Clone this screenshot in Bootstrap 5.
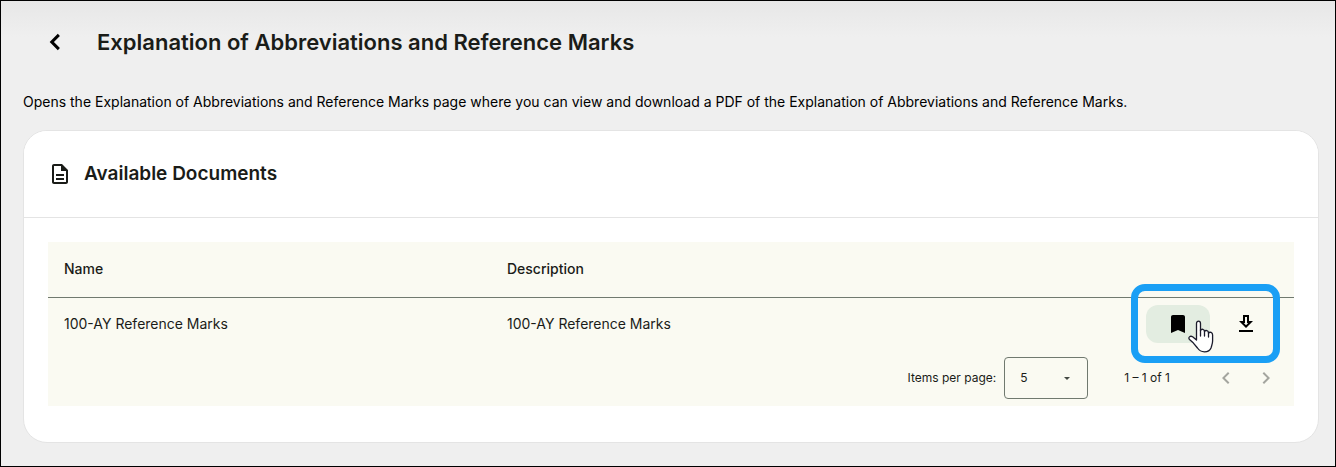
<!DOCTYPE html>
<html lang="en">
<head>
<meta charset="utf-8">
<meta name="viewport" content="width=device-width, initial-scale=1">
<title>Explanation of Abbreviations and Reference Marks</title>
<link href="https://cdn.jsdelivr.net/npm/bootstrap@5.3.0/dist/css/bootstrap.min.css" rel="stylesheet">
<style>
  body { font-family: Inter, "Liberation Sans", sans-serif; font-size: 14px; line-height: 20px; color: #1a1c18; }
  .page-shell { border: 1px solid #000; background: linear-gradient(#e7e7e7, #efefef 36px); padding: 21px 16px 20px 22px; }
  .back-btn { width: 64px; height: 40px; line-height: 0; }
  .page-title { font-size: 22px; line-height: 28px; font-weight: 600; margin-left: 10px; }
  .intro { color: #000; margin: 30px 0 18px; }
  .doc-card { --bs-card-border-color: #e4e4e4; --bs-card-border-radius: 24px; --bs-card-inner-border-radius: 23px; }
  .doc-card .card-header { background: #fff; padding: 30px 24px; border-color: #e4e4e4; }
  .card-name { font-size: 19px; line-height: 26px; font-weight: 600; }
  .doc-card .card-body { padding: 24px 24px 36px; }
  .doc-panel { background: #fafaf2; }
  .doc-table { --bs-table-bg: transparent; --bs-table-color: #1a1c18; table-layout: fixed; }
  .doc-table th, .doc-table td { padding: 0 16px; border: 0; vertical-align: middle; }
  .doc-table th { height: 55px; font-weight: 500; border-bottom: 1px solid #70796f; }
  .doc-table td { height: 53px; }
  .name-col, .desc-col { width: 443px; }
  .tool-btn { width: 64px; height: 38px; border-radius: 12px; line-height: 0; color: #000; border: 0; padding: 0; }
  .tool-btn.active, .tool-btn:hover { background: #e3ede1 !important; color: #000 !important; }
  .pager { height: 56px; font-size: 12px; padding-right: 8px; }
  .size-select { width: 84px; height: 42px; font-size: 12px; color: #1a1c18; border-color: #70796f; border-radius: 4px; padding: 0 30px 0 15px;
    background: transparent url("data:image/svg+xml,%3Csvg xmlns='http://www.w3.org/2000/svg' viewBox='0 0 6 3'%3E%3Cpath fill='%23434843' d='M0 0h6L3 3z'/%3E%3C/svg%3E") no-repeat right 17px center / 6px 3px; }
  .page-range { margin: 0 36px; }
  .step-btn { width: 40px; height: 40px; line-height: 0; padding: 0; border: 0; color: #a4a59f; }
  .step-btn:disabled { color: #a4a59f; opacity: 1; }
  .callout-frame { position: absolute; inset: -21px -2px -20px -15px; border: 7px solid #1a9ff5; border-radius: 14px; pointer-events: none; }
  .hand { position: absolute; left: 42px; top: 15px; pointer-events: none; }
</style>
</head>
<body>
<main class="page-shell min-vh-100">
  <header class="d-flex align-items-center">
    <button type="button" class="btn back-btn p-0 border-0 flex-shrink-0" aria-label="Back">
      <svg width="32" height="32" viewBox="0 0 24 24" fill="#000"><path d="M15.700 7.500 14.100 5.900 8 12l6.100 6.100 1.600-1.600L11.200 12z"/></svg>
    </button>
    <h1 class="page-title mb-0">Explanation of Abbreviations and Reference Marks</h1>
  </header>
  <p class="intro">Opens the Explanation of Abbreviations and Reference Marks page where you can view and download a PDF of the Explanation of Abbreviations and Reference Marks.</p>
  <section class="card doc-card">
    <div class="card-header d-flex align-items-center">
      <svg width="24" height="24" viewBox="0 0 24 24" fill="#1a1c18" aria-hidden="true"><path d="M8 16h8v2H8zm0-4h8v2H8zm6-10H6c-1.100 0-2 .9-2 2v16c0 1.100.890 2 1.990 2H18c1.100 0 2-.9 2-2V8zm4 18H6V4h7v5h5z"/><path d="M13 3v6h6z"/></svg>
      <h2 class="card-name mb-0 ms-2 ps-1">Available Documents</h2>
    </div>
    <div class="card-body">
      <div class="doc-panel">
        <table class="table doc-table mb-0">
          <thead>
            <tr><th class="name-col" scope="col">Name</th><th class="desc-col" scope="col">Description</th><th scope="col" aria-label="Actions"></th></tr>
          </thead>
          <tbody>
            <tr>
              <td>100-AY Reference Marks</td>
              <td>100-AY Reference Marks</td>
              <td>
                <div class="d-flex justify-content-end">
                  <div class="d-flex gap-1 position-relative">
                    <button type="button" class="btn tool-btn active" aria-label="Bookmark">
                      <svg width="24" height="24" viewBox="0 0 24 24" fill="currentColor"><path d="M17 3H7c-1.100 0-2 .9-2 2v16l7-3 7 3V5c0-1.100-.9-2-2-2z"/></svg>
                    </button>
                    <button type="button" class="btn tool-btn" aria-label="Download">
                      <svg width="24" height="24" viewBox="0 0 24 24" fill="currentColor"><path d="M19 9h-4V3H9v6H5l7 7zm-8 2V5h2v6h1.170L12 13.170 9.830 11zm-6 7h14v2H5z"/></svg>
                    </button>
                    <span class="callout-frame"></span>
                    <svg class="hand" width="26" height="34" viewBox="0 0 26 34" fill="#fff" stroke="#1b1b2b" stroke-width="1.300" stroke-linejoin="round" stroke-linecap="round" aria-hidden="true">
                      <path d="M8.500 20V3.500C8.500 .4 12.500 .4 12.500 3.500V10.500C13.500 8.500 16.500 9 16.500 11.500C17.500 9.800 20.500 10.300 20.500 13C22 11.500 24.600 12.300 24.600 15V21C24.600 24 23.500 26 23 28C22 30.500 19.500 31.800 16.500 31.800C13 31.800 10.800 30 9.500 28L5.200 22.800L1.500 19.500C-.3 17.600 2.200 15.300 4.600 16.800Z"/>
                      <path fill="none" d="M12.500 10v6M16.500 11.500V16M20.500 13v4"/>
                    </svg>
                  </div>
                </div>
              </td>
            </tr>
          </tbody>
        </table>
        <div class="pager d-flex align-items-center justify-content-end">
          <label for="page-size" class="me-2">Items per page:</label>
          <select id="page-size" class="form-select size-select"><option>5</option><option>10</option><option>25</option></select>
          <span class="page-range">1 – 1 of 1</span>
          <button type="button" class="btn step-btn" disabled aria-label="Previous page">
            <svg width="24" height="24" viewBox="0 0 24 24" fill="currentColor"><path d="M15.410 7.410 14 6l-6 6 6 6 1.410-1.410L10.830 12z"/></svg>
          </button>
          <button type="button" class="btn step-btn" disabled aria-label="Next page">
            <svg width="24" height="24" viewBox="0 0 24 24" fill="currentColor"><path d="M10 6 8.590 7.410 13.170 12l-4.580 4.590L10 18l6-6z"/></svg>
          </button>
        </div>
      </div>
    </div>
  </section>
</main>
<script src="https://cdn.jsdelivr.net/npm/bootstrap@5.3.0/dist/js/bootstrap.bundle.min.js"></script>
</body>
</html>
